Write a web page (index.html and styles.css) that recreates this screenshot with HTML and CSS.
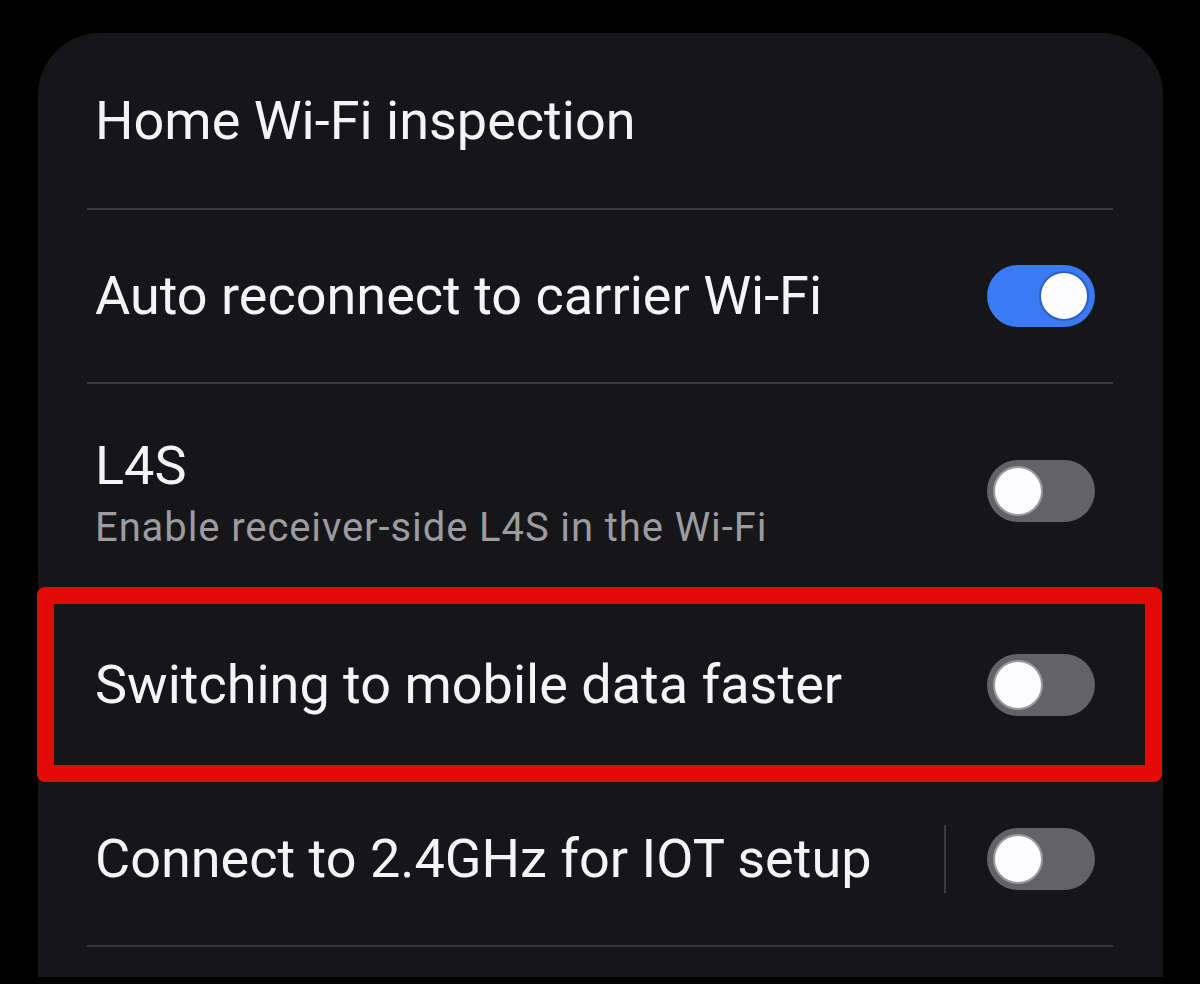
FILE: index.html
```html
<!DOCTYPE html>
<html lang="en">
<head>
<meta charset="utf-8">
<title>Wi-Fi settings</title>
<link rel="stylesheet" href="styles.css">
</head>
<body>
<div class="card">
  <div class="row row-first">
    <div class="text"><div class="title">Home Wi-Fi inspection</div></div>
  </div>
  <div class="row">
    <div class="text"><div class="title">Auto reconnect to carrier Wi-Fi</div></div>
    <div class="toggle on"><span class="knob"></span></div>
  </div>
  <div class="row row-tall">
    <div class="text text-two">
      <div class="title">L4S</div>
      <div class="subtitle">Enable receiver-side L4S in the Wi-Fi</div>
    </div>
    <div class="toggle"><span class="knob"></span></div>
  </div>
  <div class="row">
    <div class="text"><div class="title">Switching to mobile data faster</div></div>
    <div class="toggle"><span class="knob"></span></div>
  </div>
  <div class="row">
    <div class="text"><div class="title">Connect to 2.4GHz for IOT setup</div></div>
    <div class="vsep"></div>
    <div class="toggle"><span class="knob"></span></div>
  </div>
  <div class="highlight"></div>
</div>
</body>
</html>
```
FILE: styles.css
```css
html, body {
  margin: 0;
  padding: 0;
  background: #000;
}
body {
  width: 1200px;
  height: 984px;
  overflow: hidden;
  font-family: Roboto, "Liberation Sans", sans-serif;
  color: #f4f4f6;
}
.card {
  position: relative;
  margin: 33px 0 0 38px;
  width: 1125px;
  height: 944px;
  box-sizing: border-box;
  padding: 0 50px 0 49px;
  background: #161619;
  border-radius: 62px 62px 0 0;
}
.row {
  display: flex;
  align-items: center;
  height: 172px;
  padding: 0 18px 0 8px;
  border-bottom: 2px solid #3a3a3d;
}
.row-first {
  height: 175px;
}
.row-tall {
  height: 213px;
}
.text {
  flex: 1;
  min-width: 0;
}
.text-two {
  padding-top: 4px;
}
.title {
  font-size: 54px;
  line-height: 62px;
  white-space: nowrap;
}
.subtitle {
  font-size: 40px;
  line-height: 46px;
  letter-spacing: 0.9px;
  color: #9b9ba0;
  margin-top: 8px;
  white-space: nowrap;
}
.toggle {
  position: relative;
  flex: none;
  width: 108px;
  height: 62px;
  border-radius: 31px;
  background: #636267;
  box-sizing: border-box;
}
.toggle.on {
  background: #3a7af2;
}
.knob {
  position: absolute;
  top: 6px;
  left: 6px;
  width: 50px;
  height: 50px;
  box-sizing: border-box;
  border-radius: 50%;
  background: #fdfdff;
  border: 2px solid #9a9aa0;
}
.toggle.on .knob {
  left: auto;
  right: 6px;
  border-color: #2b5fc4;
}
.vsep {
  flex: none;
  width: 2px;
  height: 68px;
  background: #3c3c40;
  margin-right: 41px;
}
.highlight {
  position: absolute;
  left: -1px;
  top: 554px;
  width: 1125px;
  height: 195px;
  box-sizing: border-box;
  border: 17px solid #e30a0a;
  border-radius: 8px;
  pointer-events: none;
}
```
